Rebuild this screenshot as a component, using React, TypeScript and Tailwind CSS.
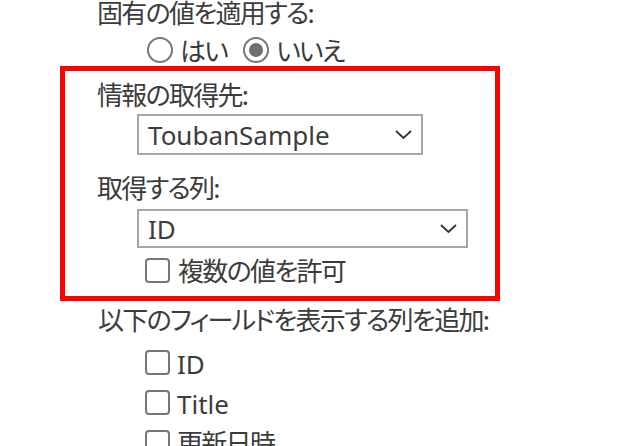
import React from "react";

const Chevron = () => (
  <svg width="17" height="9" viewBox="0 0 17 9" fill="none" className="shrink-0">
    <path d="M1 1 L8.5 8 L16 1" stroke="#333333" strokeWidth="1.8" />
  </svg>
);

const Checkbox = () => (
  <div className="w-[25px] h-[25px] border-2 border-[#777777] rounded-[4px] bg-white shrink-0" />
);

const Radio = ({ checked }: { checked?: boolean }) => (
  <div className="w-[26px] h-[26px] rounded-full border-2 border-[#777777] flex items-center justify-center shrink-0">
    {checked && <div className="w-[14px] h-[14px] rounded-full bg-[#6e6e6e]" />}
  </div>
);

const Latin = ({ children }: { children: React.ReactNode }) => (
  <span className="text-[26px] leading-none tracking-normal" style={{ fontFamily: '"Noto Sans", sans-serif' }}>
    {children}
  </span>
);

const Select = ({ value, w, h }: { value: string; w: string; h: string }) => (
  <div className={`${w} ${h} border-2 border-[#a6a6a6] flex items-center justify-between pl-[9px] pr-[9px] bg-white`}>
    <Latin>{value}</Latin>
    <Chevron />
  </div>
);

export default function App() {
  return (
    <div
      className="w-[635px] h-[446px] overflow-hidden bg-white text-[#3c3c3c] text-[26px] tracking-[-1.7px] flex flex-col"
      style={{ fontFamily: '"Noto Sans CJK JP", sans-serif', fontFeatureSettings: '"palt"' }}
    >
      <div className="h-[24px] flex items-center pl-[97px] leading-none">固有の値を適用する:</div>
      <div className="h-[30px] mt-[13px] flex items-center pl-[147px]">
        <Radio />
        <span className="ml-[7px] leading-none">はい</span>
        <div className="ml-[16px]">
          <Radio checked />
        </div>
        <span className="ml-[7px] leading-none">いいえ</span>
      </div>
      <div className="mt-[3px] ml-[60px] w-[440px] h-[235px] border-[5px] border-[#ff0000] flex flex-col shrink-0">
        <div className="h-[30px] mt-[8px] pl-[32px] flex items-center leading-none">情報の取得先:</div>
        <div className="mt-[5px] ml-[72px]">
          <Select value="ToubanSample" w="w-[286px]" h="h-[41px]" />
        </div>
        <div className="h-[30px] mt-[17px] pl-[32px] flex items-center leading-none">取得する列:</div>
        <div className="mt-[7px] ml-[72px]">
          <Select value="ID" w="w-[331px]" h="h-[39px]" />
        </div>
        <div className="h-[30px] mt-[7px] ml-[80px] flex items-center">
          <Checkbox />
          <span className="ml-[8px] leading-none">複数の値を許可</span>
        </div>
      </div>
      <div className="h-[30px] mt-[3px] pl-[98px] flex items-center leading-none shrink-0">以下のフィールドを表示する列を追加:</div>
      <div className="h-[30px] mt-[13px] pl-[145px] flex items-center shrink-0">
        <Checkbox />
        <span className="ml-[7px]"><Latin>ID</Latin></span>
      </div>
      <div className="h-[30px] mt-[10px] pl-[145px] flex items-center shrink-0">
        <Checkbox />
        <span className="ml-[7px]"><Latin>Title</Latin></span>
      </div>
      <div className="h-[30px] mt-[10px] pl-[145px] flex items-center shrink-0">
        <Checkbox />
        <span className="ml-[7px] leading-none">更新日時</span>
      </div>
    </div>
  );
}
